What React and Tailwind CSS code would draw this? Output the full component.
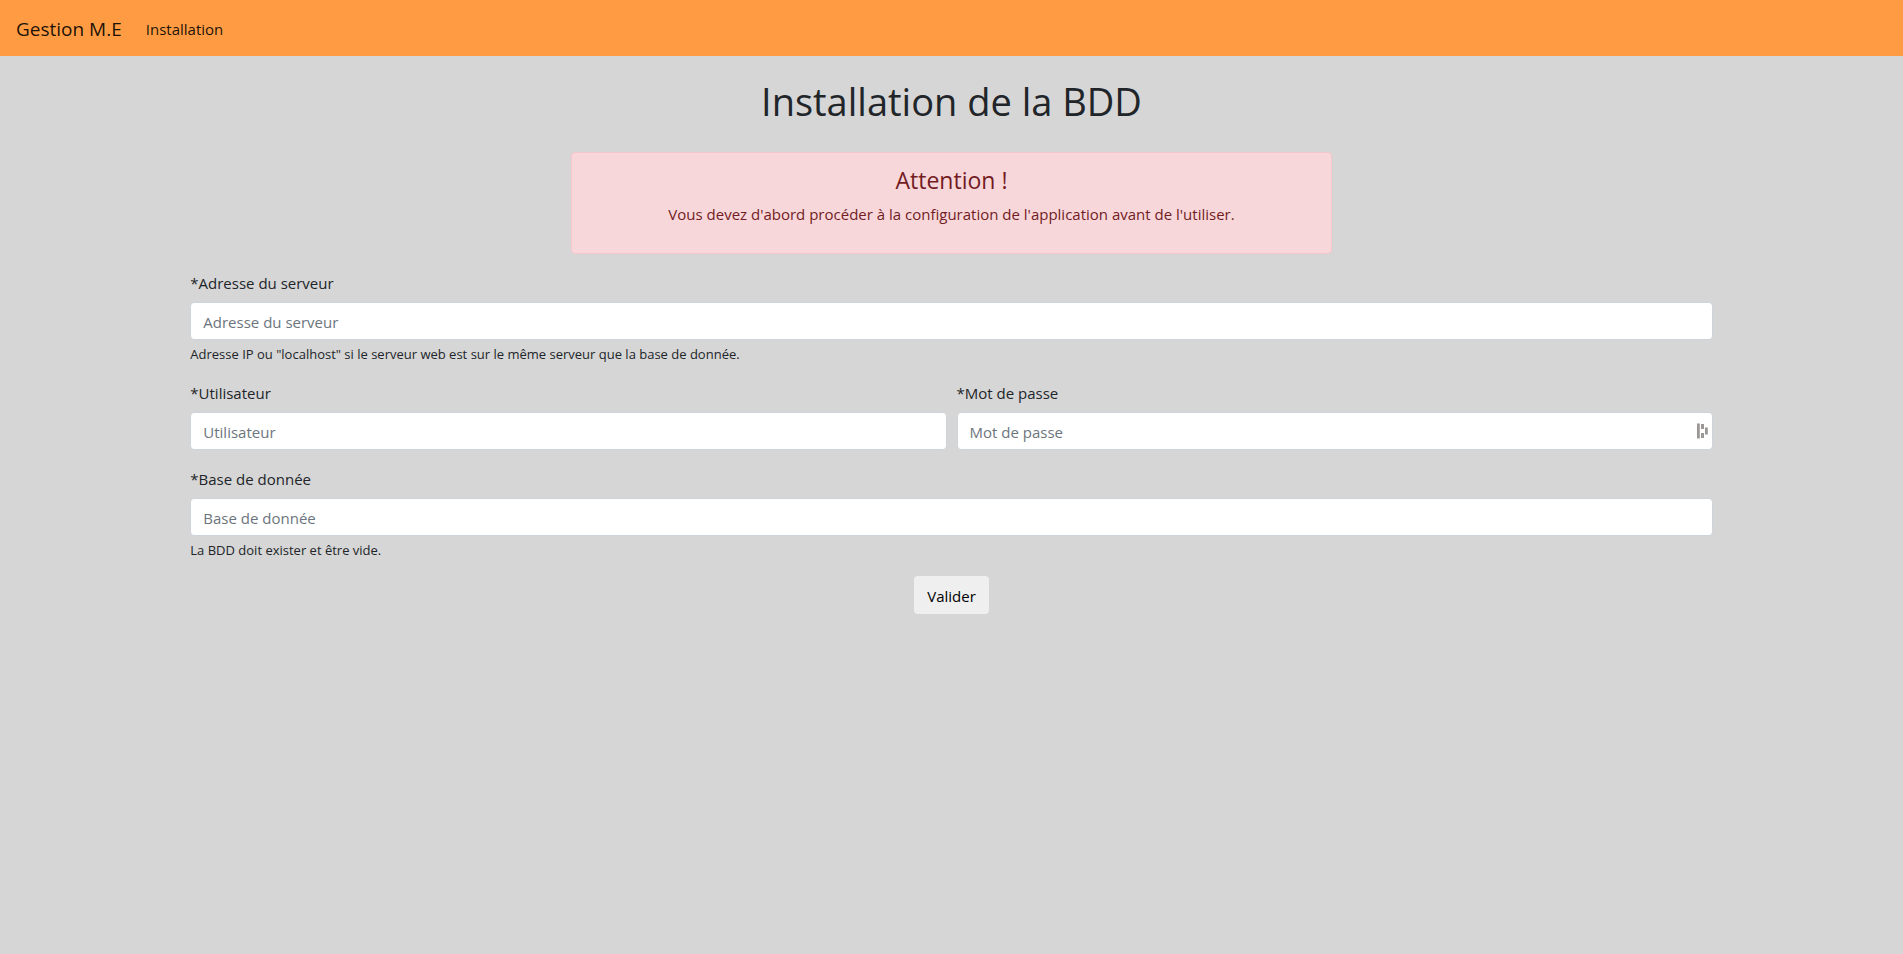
function Field({ id, label, type = "text", help, children }) {
  return (
    <div className="mb-4 min-w-0 flex-1">
      <label htmlFor={id} className="mb-[7px] block pt-px text-[15px] leading-6">
        *{label}
      </label>
      <div className="relative">
        <input
          id={id}
          type={type}
          placeholder={label}
          aria-describedby={help ? `${id}-help` : undefined}
          className="block h-[38px] w-full rounded border border-[#ced4da] bg-white px-3 pt-1 pb-0.5 text-[15px] text-[#495057] placeholder:text-[#6c757d] placeholder:opacity-100"
        />
        {children}
      </div>
      {help && (
        <small id={`${id}-help`} className="mt-1 block text-[13px] leading-5">
          {help}
        </small>
      )}
    </div>
  );
}

function PasswordManagerIcon() {
  return (
    <svg
      aria-hidden="true"
      viewBox="0 0 12 16"
      className="absolute top-1/2 right-1 h-4 w-3 -translate-y-1/2"
      fill="#9b9794"
    >
      <rect x="0" y="0.5" width="2.8" height="15" />
      <rect x="4" y="1" width="3" height="5" />
      <rect x="4" y="10" width="3" height="5" />
      <rect x="8" y="4.5" width="2.8" height="7" />
    </svg>
  );
}

export default function App() {
  return (
    <div className="min-h-screen bg-[#d6d6d6] font-['Open_Sans','Noto_Sans',sans-serif] text-[#212529]">
      <nav className="flex h-14 items-center gap-6 bg-[#ff9c43] px-4 pt-0.5 text-black/90">
        <a href="#" className="text-[19px] leading-7">
          Gestion M.E
        </a>
        <a href="#installation" className="text-[15px] leading-6">
          Installation
        </a>
      </nav>

      <main className="mx-auto w-4/5 pt-5">
        <h1 className="text-center text-[38px] leading-[50px]">Installation de la BDD</h1>

        <div
          role="alert"
          className="mx-auto mt-[26px] mb-4 w-1/2 rounded border border-[#f5c6cb] bg-[#f8d7da] px-5 pt-[13px] pb-[27px] text-center text-[#721c24]"
        >
          <h4 className="mb-2 text-[23px] leading-7">Attention !</h4>
          <p className="text-[15px] leading-6">
            Vous devez d'abord procéder à la configuration de l'application avant de l'utiliser.
          </p>
        </div>

        <form onSubmit={(event) => event.preventDefault()}>
          <Field
            id="server"
            label="Adresse du serveur"
            help={'Adresse IP ou "localhost" si le serveur web est sur le même serveur que la base de donnée.'}
          />
          <div className="flex gap-2.5">
            <Field id="user" label="Utilisateur" />
            <Field id="password" label="Mot de passe" type="password">
              <PasswordManagerIcon />
            </Field>
          </div>
          <Field id="database" label="Base de donnée" help="La BDD doit exister et être vide." />
          <div className="text-center">
            <button
              type="submit"
              className="h-[38px] rounded bg-[#efefef] px-[13px] pt-0.5 text-[15px] leading-6 text-black"
            >
              Valider
            </button>
          </div>
        </form>
      </main>
    </div>
  );
}
